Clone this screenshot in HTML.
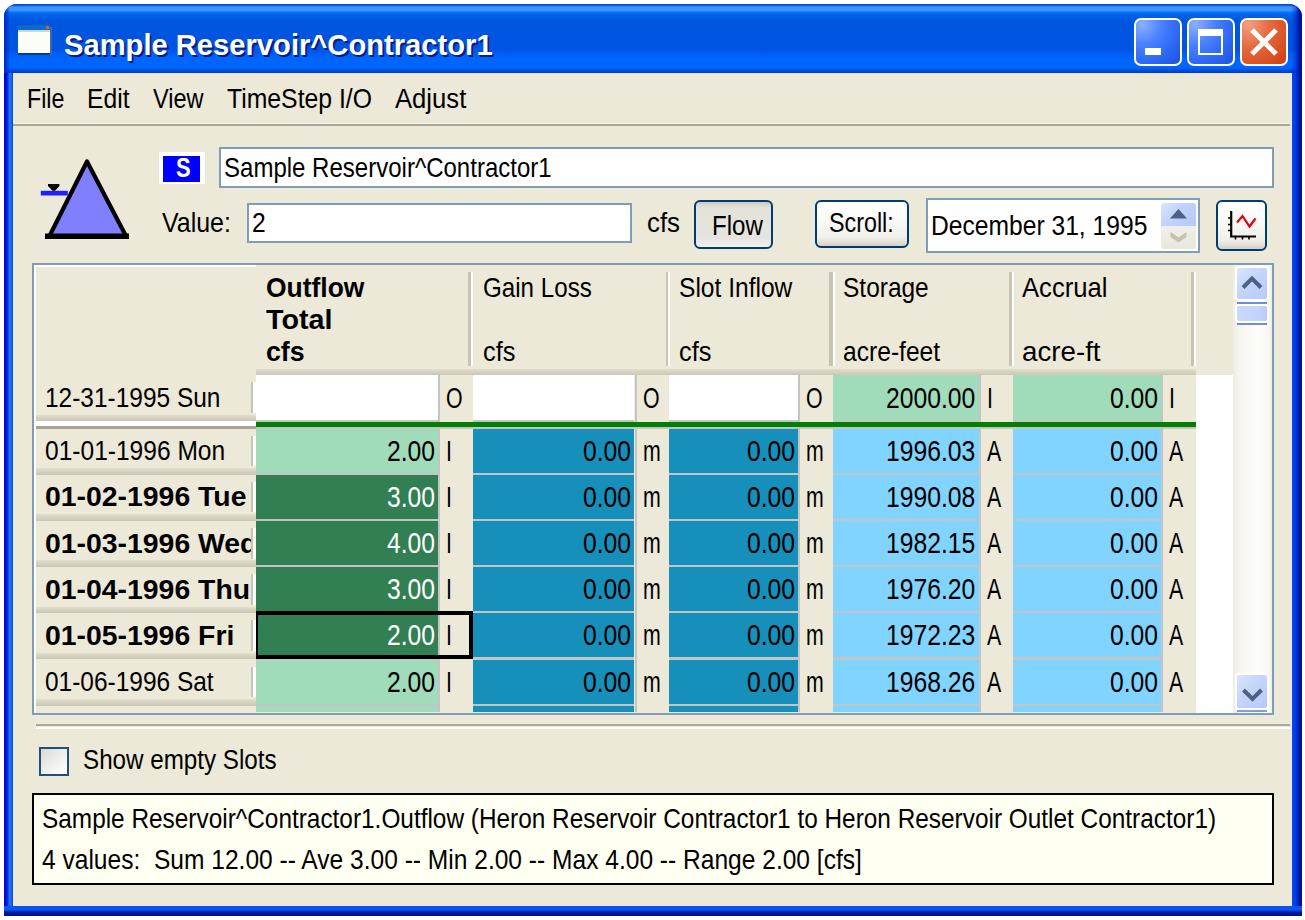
<!DOCTYPE html>
<html><head><meta charset="utf-8">
<style>
*{box-sizing:border-box;margin:0;padding:0}
html,body{width:1305px;height:920px;overflow:hidden;background:#fff;font-family:"Liberation Sans",sans-serif;color:#000;position:relative}
.a{position:absolute}
.t{position:absolute;white-space:nowrap}
</style></head><body>

<div class="a" style="left:4px;top:4px;width:1298px;height:912px;border-radius:13px 13px 0 0;overflow:hidden;background:#0831D9">
<div class="a" style="left:0;top:0;width:1298px;height:69px;background:linear-gradient(to bottom,#0040D8 0px,#0C5CF0 1.5px,#3D95FF 3px,#3D95FF 6.5px,#0A7AF5 8px,#0066EE 10px,#0055DD 17px,#0054E3 46px,#005EF7 50px,#0066FF 55px,#0064FA 64px,#0050E0 66px,#0038D0 69px)"></div>
<div class="a" style="left:0;top:69px;width:9px;height:843px;background:linear-gradient(to right,#0000D0 0,#0014D8 2px,#0A30E0 4px,#1C70F0 5px,#1C70F0 7px,#0040E0 9px)"></div>
<div class="a" style="left:1288px;top:69px;width:10px;height:843px;background:linear-gradient(to right,#0048F0 0,#0040E8 3px,#0030D0 5px,#001AA0 7px,#00108A 10px)"></div>
<div class="a" style="left:0;top:902px;width:1298px;height:10px;background:linear-gradient(to bottom,#0A50F0 0,#0A5AF5 3px,#0040D8 5px,#001AA0 6px,#00108A 10px)"></div>
<div class="a" style="left:1287px;top:0;width:11px;height:69px;background:linear-gradient(to right,rgba(0,40,200,0) 0,rgba(0,30,190,0.5) 5px,#0018A8 8px,#00108C 11px)"></div>
<div class="a" style="left:0;top:0;width:6px;height:69px;background:linear-gradient(to right,#0028C8 0,rgba(0,40,210,0.6) 3px,rgba(0,60,230,0) 6px)"></div>
</div>
<div class="a" style="left:13.00px;top:73.00px;width:1279.00px;height:833.00px;background:#ECE9D8;"></div>
<div class="a" style="left:18.00px;top:25.00px;width:32.00px;height:4.50px;background:#0A6ACC;"></div>
<div class="a" style="left:46.00px;top:26.00px;width:3.00px;height:3.00px;background:#F05A10;"></div>
<div class="a" style="left:18.00px;top:29.50px;width:32.00px;height:2.50px;background:#C8D8D8;"></div>
<div class="a" style="left:18.00px;top:32.00px;width:32.00px;height:20.50px;background:#FCFDF6;"></div>
<div class="a" style="left:18.00px;top:52.50px;width:34.00px;height:2.00px;background:#0A3A8A;"></div>
<div class="a" style="left:50.00px;top:27.00px;width:2.00px;height:27.50px;background:#3A6AB0;"></div>
<div class="t" style="left:63.50px;top:29.61px;font-size:30px;line-height:30px;color:#fff;font-weight:bold;transform:scale(0.9719,1.0000);transform-origin:0 25.39px;text-shadow:2px 2px 0 #0A1E80;">Sample Reservoir^Contractor1</div>
<div class="a" style="left:1133.5px;top:18px;width:48px;height:48px;border:2px solid #fff;border-radius:7px;background:radial-gradient(ellipse at 15% 10%,#8CB0FF 0,#4A82FF 35%,#2C66F4 70%,#1E52DC 100%)"></div>
<div class="a" style="left:1145.00px;top:48.00px;width:16.00px;height:7.00px;background:#fff;"></div>
<div class="a" style="left:1186.5px;top:18px;width:48px;height:48px;border:2px solid #fff;border-radius:7px;background:radial-gradient(ellipse at 15% 10%,#8CB0FF 0,#4A82FF 35%,#2C66F4 70%,#1E52DC 100%)"></div>
<div class="a" style="left:1198px;top:29px;width:25px;height:26px;border:2.5px solid #fff;border-top-width:7px"></div>
<div class="a" style="left:1240px;top:18px;width:48px;height:48px;border:2px solid #fff;border-radius:7px;background:radial-gradient(ellipse at 15% 10%,#F2A080 0,#E46A40 40%,#DA5020 75%,#CC4010 100%)"></div>
<svg class="a" style="left:1240px;top:18px" width="48" height="48"><path d="M12 12 L36 36 M36 12 L12 36" stroke="#fff" stroke-width="5"/></svg>
<div class="t" style="left:27.30px;top:86.49px;font-size:26px;line-height:26px;color:#000;transform:scale(0.8935,1.0800);transform-origin:0 22.01px;">File</div>
<div class="t" style="left:87.40px;top:86.49px;font-size:26px;line-height:26px;color:#000;transform:scale(0.9498,1.0800);transform-origin:0 22.01px;">Edit</div>
<div class="t" style="left:152.90px;top:86.49px;font-size:26px;line-height:26px;color:#000;transform:scale(0.9052,1.0800);transform-origin:0 22.01px;">View</div>
<div class="t" style="left:227.00px;top:86.49px;font-size:26px;line-height:26px;color:#000;transform:scale(0.9525,1.0800);transform-origin:0 22.01px;">TimeStep I/O</div>
<div class="t" style="left:395.30px;top:86.49px;font-size:26px;line-height:26px;color:#000;transform:scale(0.9864,1.0800);transform-origin:0 22.01px;">Adjust</div>
<div class="a" style="left:13.00px;top:122.50px;width:1277.00px;height:1.50px;background:#F4F2E8;"></div>
<div class="a" style="left:13.00px;top:124.00px;width:1277.00px;height:2.20px;background:#A7A593;"></div>
<svg class="a" style="left:30px;top:150px" width="110" height="95" viewBox="0 0 110 95">
<polygon points="57,11.5 96.5,87 19,87" fill="#8080FF" stroke="#000" stroke-width="4.2" stroke-linejoin="round"/>
<rect x="15" y="83.5" width="84" height="5.5" fill="#000"/>
<rect x="10.8" y="40.8" width="27" height="4.7" fill="#2020FF"/>
<polygon points="18,34 29.4,34 29.4,36 25,40.8 22.5,40.8 18,36" fill="#000"/>
</svg>
<div class="a" style="left:159.00px;top:152.20px;width:45.70px;height:31.60px;background:#fff;"></div>
<div class="a" style="left:163.00px;top:156.00px;width:37.30px;height:25.80px;background:#0000FF;"></div>
<div class="t" style="left:176.00px;top:156.68px;font-size:24px;line-height:24px;color:#fff;font-weight:bold;transform:scale(0.9148,1.1200);transform-origin:0 20.32px;">S</div>
<div class="a" style="left:218.5px;top:147.2px;width:1055.5px;height:41px;border:2px solid #7F9DB9;background:#fff"></div>
<div class="t" style="left:224.20px;top:154.99px;font-size:26px;line-height:26px;color:#000;transform:scale(0.9238,1.0800);transform-origin:0 22.01px;">Sample Reservoir^Contractor1</div>
<div class="t" style="left:162.20px;top:210.49px;font-size:26px;line-height:26px;color:#000;transform:scale(0.9601,1.0800);transform-origin:0 22.01px;">Value:</div>
<div class="a" style="left:246.9px;top:202.9px;width:385.0px;height:40.6px;border:2px solid #7F9DB9;background:#fff"></div>
<div class="t" style="left:251.90px;top:210.49px;font-size:26px;line-height:26px;color:#000;transform:scale(0.9494,1.0800);transform-origin:0 22.01px;">2</div>
<div class="t" style="left:646.50px;top:209.69px;font-size:26px;line-height:26px;color:#000;transform:scale(0.9946,1.0800);transform-origin:0 22.01px;">cfs</div>
<div class="a" style="left:694.3px;top:200px;width:78.6px;height:49px;border:2px solid #003C74;border-radius:6px;background:linear-gradient(to bottom,#CDCAC3 0,#E3E2DA 12%,#E5E4DE 80%,#F2F1EE 100%)"></div>
<div class="t" style="left:711.60px;top:212.79px;font-size:26px;line-height:26px;color:#000;transform:scale(0.9274,1.0800);transform-origin:0 22.01px;">Flow</div>
<div class="a" style="left:815px;top:200.4px;width:93.8px;height:48.1px;border:2px solid #003C74;border-radius:6px;background:linear-gradient(to bottom,#FFFFFF 0,#FBFBF9 30%,#F0F0EA 80%,#E3DFD4 92%,#D6D0C5 100%)"></div>
<div class="t" style="left:829.30px;top:209.69px;font-size:26px;line-height:26px;color:#000;transform:scale(0.8965,1.0800);transform-origin:0 22.01px;">Scroll:</div>
<div class="a" style="left:925.7px;top:198.3px;width:274.1px;height:54.5px;border:2px solid #7F9DB9;background:#fff"></div>
<div class="t" style="left:931.10px;top:212.69px;font-size:26px;line-height:26px;color:#000;transform:scale(0.9474,1.0800);transform-origin:0 22.01px;">December 31, 1995</div>
<div class="a" style="left:1161px;top:202.9px;width:34.7px;height:22.7px;border-radius:3px 3px 0 0;background:linear-gradient(135deg,#DCE6FC 0,#C2D4FA 40%,#B4C9F8 100%)"></div>
<div class="a" style="left:1161px;top:225.6px;width:34.7px;height:23px;border-radius:0 0 3px 3px;background:linear-gradient(to bottom,#EFEEE8 0,#E9E8E0 100%)"></div>
<svg class="a" style="left:1161px;top:202.9px" width="35" height="46"><path d="M9 15.5 L17.5 6 L26 15.5 Z" fill="#4D6185"/><path d="M9.5 29 L17.5 34.5 L25.5 29 L25.5 34 L17.5 39.5 L9.5 34 Z" fill="#C5C2B2"/></svg>
<div class="a" style="left:1216.4px;top:200.1px;width:50.6px;height:50.6px;border:2px solid #003C74;border-radius:6px;background:linear-gradient(to bottom,#FFFFFF 0,#FBFBF9 30%,#F0F0EA 80%,#E3DFD4 92%,#D6D0C5 100%)"></div>
<svg class="a" style="left:1216.4px;top:200.1px" width="51" height="51">
<path d="M15.2 11 V36.5 H40" fill="none" stroke="#000" stroke-width="2.2"/>
<path d="M12 18h3 M12 24.5h3 M12 30.5h3 M19.5 37v2.5 M26.5 37v2.5 M33 37v2.5" stroke="#000" stroke-width="1.6"/>
<path d="M21 22.5 L26.5 16 L33.5 26.5 L39.5 18.5" fill="none" stroke="#E00010" stroke-width="2.2"/>
</svg>
<div class="a" style="left:32px;top:262.5px;width:1242px;height:452.0px;border:2px solid #7F9DB9;background:#ECE9D8"></div>
<div class="a" style="left:34.00px;top:264.50px;width:222.00px;height:2.00px;background:#fff;"></div>
<div class="a" style="left:34.00px;top:264.50px;width:2.00px;height:448.00px;background:#fff;"></div>
<div class="a" style="left:256.00px;top:368.80px;width:939.60px;height:6.20px;background:linear-gradient(to bottom,#E2DECD 0,#D6D2C2 50%,#CBC7B8 100%);"></div>
<div class="a" style="left:468.20px;top:271.60px;width:2.40px;height:94.90px;background:#C7C5B2;"></div>
<div class="a" style="left:470.60px;top:271.60px;width:2.00px;height:94.90px;background:#FFFFFF;"></div>
<div class="a" style="left:665.50px;top:271.60px;width:2.80px;height:94.90px;background:#C7C5B2;"></div>
<div class="a" style="left:668.30px;top:271.60px;width:2.00px;height:94.90px;background:#FFFFFF;"></div>
<div class="a" style="left:829.40px;top:271.60px;width:3.20px;height:94.90px;background:#C7C5B2;"></div>
<div class="a" style="left:832.60px;top:271.60px;width:2.00px;height:94.90px;background:#FFFFFF;"></div>
<div class="a" style="left:1008.90px;top:271.60px;width:3.50px;height:94.90px;background:#C7C5B2;"></div>
<div class="a" style="left:1012.40px;top:271.60px;width:2.00px;height:94.90px;background:#FFFFFF;"></div>
<div class="a" style="left:1190.80px;top:271.60px;width:2.80px;height:94.90px;background:#C7C5B2;"></div>
<div class="a" style="left:1193.60px;top:271.60px;width:2.00px;height:94.90px;background:#FFFFFF;"></div>
<div class="t" style="left:266.00px;top:274.79px;font-size:26px;line-height:26px;color:#000;font-weight:bold;transform:scale(1.0170,1.0800);transform-origin:0 22.01px;">Outflow</div>
<div class="t" style="left:266.00px;top:307.19px;font-size:26px;line-height:26px;color:#000;font-weight:bold;transform:scale(1.1048,1.0800);transform-origin:0 22.01px;">Total</div>
<div class="t" style="left:266.00px;top:339.19px;font-size:26px;line-height:26px;color:#000;font-weight:bold;transform:scale(1.0274,1.0800);transform-origin:0 22.01px;">cfs</div>
<div class="t" style="left:482.70px;top:274.79px;font-size:26px;line-height:26px;color:#000;transform:scale(0.9297,1.0800);transform-origin:0 22.01px;">Gain Loss</div>
<div class="t" style="left:482.70px;top:339.19px;font-size:26px;line-height:26px;color:#000;transform:scale(0.9766,1.0800);transform-origin:0 22.01px;">cfs</div>
<div class="t" style="left:679.20px;top:274.79px;font-size:26px;line-height:26px;color:#000;transform:scale(0.9451,1.0800);transform-origin:0 22.01px;">Slot Inflow</div>
<div class="t" style="left:679.20px;top:339.19px;font-size:26px;line-height:26px;color:#000;transform:scale(0.9766,1.0800);transform-origin:0 22.01px;">cfs</div>
<div class="t" style="left:843.00px;top:274.79px;font-size:26px;line-height:26px;color:#000;transform:scale(0.9415,1.0800);transform-origin:0 22.01px;">Storage</div>
<div class="t" style="left:843.00px;top:339.19px;font-size:26px;line-height:26px;color:#000;transform:scale(0.9467,1.0800);transform-origin:0 22.01px;">acre-feet</div>
<div class="t" style="left:1021.50px;top:274.79px;font-size:26px;line-height:26px;color:#000;transform:scale(0.9860,1.0800);transform-origin:0 22.01px;">Accrual</div>
<div class="t" style="left:1021.50px;top:339.19px;font-size:26px;line-height:26px;color:#000;transform:scale(1.0663,1.0800);transform-origin:0 22.01px;">acre-ft</div>
<div class="a" style="left:1195.60px;top:375.00px;width:37.40px;height:337.50px;background:#fff;"></div>
<div class="a" style="left:256.00px;top:375.00px;width:182.10px;height:44.50px;background:#fff;"></div>
<div class="a" style="left:256.00px;top:419.50px;width:182.10px;height:2.20px;background:#C4C4C4;"></div>
<div class="a" style="left:438.10px;top:375.00px;width:2.10px;height:46.70px;background:#C4C4C4;"></div>
<div class="a" style="left:440.20px;top:375.00px;width:32.70px;height:46.70px;background:#ECE9D8;"></div>
<div class="a" style="left:256.00px;top:428.60px;width:182.10px;height:44.00px;background:#A0DCBA;"></div>
<div class="a" style="left:256.00px;top:472.60px;width:182.10px;height:2.20px;background:#C4C4C4;"></div>
<div class="a" style="left:438.10px;top:428.60px;width:2.10px;height:46.20px;background:#C4C4C4;"></div>
<div class="a" style="left:440.20px;top:428.60px;width:32.70px;height:46.20px;background:#ECE9D8;"></div>
<div class="a" style="left:256.00px;top:474.80px;width:182.10px;height:44.00px;background:#317F52;"></div>
<div class="a" style="left:256.00px;top:518.80px;width:182.10px;height:2.20px;background:#C4C4C4;"></div>
<div class="a" style="left:438.10px;top:474.80px;width:2.10px;height:46.20px;background:#C4C4C4;"></div>
<div class="a" style="left:440.20px;top:474.80px;width:32.70px;height:46.20px;background:#ECE9D8;"></div>
<div class="a" style="left:256.00px;top:521.00px;width:182.10px;height:44.00px;background:#317F52;"></div>
<div class="a" style="left:256.00px;top:565.00px;width:182.10px;height:2.20px;background:#C4C4C4;"></div>
<div class="a" style="left:438.10px;top:521.00px;width:2.10px;height:46.20px;background:#C4C4C4;"></div>
<div class="a" style="left:440.20px;top:521.00px;width:32.70px;height:46.20px;background:#ECE9D8;"></div>
<div class="a" style="left:256.00px;top:567.20px;width:182.10px;height:44.00px;background:#317F52;"></div>
<div class="a" style="left:256.00px;top:611.20px;width:182.10px;height:2.20px;background:#C4C4C4;"></div>
<div class="a" style="left:438.10px;top:567.20px;width:2.10px;height:46.20px;background:#C4C4C4;"></div>
<div class="a" style="left:440.20px;top:567.20px;width:32.70px;height:46.20px;background:#ECE9D8;"></div>
<div class="a" style="left:256.00px;top:613.40px;width:182.10px;height:44.00px;background:#317F52;"></div>
<div class="a" style="left:256.00px;top:657.40px;width:182.10px;height:2.20px;background:#C4C4C4;"></div>
<div class="a" style="left:438.10px;top:613.40px;width:2.10px;height:46.20px;background:#C4C4C4;"></div>
<div class="a" style="left:440.20px;top:613.40px;width:32.70px;height:46.20px;background:#ECE9D8;"></div>
<div class="a" style="left:256.00px;top:659.60px;width:182.10px;height:44.00px;background:#A0DCBA;"></div>
<div class="a" style="left:256.00px;top:703.60px;width:182.10px;height:2.20px;background:#C4C4C4;"></div>
<div class="a" style="left:438.10px;top:659.60px;width:2.10px;height:46.20px;background:#C4C4C4;"></div>
<div class="a" style="left:440.20px;top:659.60px;width:32.70px;height:46.20px;background:#ECE9D8;"></div>
<div class="a" style="left:256.00px;top:705.80px;width:182.10px;height:6.70px;background:#A0DCBA;"></div>
<div class="a" style="left:438.10px;top:705.80px;width:2.10px;height:6.70px;background:#C4C4C4;"></div>
<div class="a" style="left:440.20px;top:705.80px;width:32.70px;height:6.70px;background:#ECE9D8;"></div>
<div class="a" style="left:472.90px;top:375.00px;width:161.60px;height:44.50px;background:#fff;"></div>
<div class="a" style="left:472.90px;top:419.50px;width:161.60px;height:2.20px;background:#C4C4C4;"></div>
<div class="a" style="left:634.50px;top:375.00px;width:2.30px;height:46.70px;background:#C4C4C4;"></div>
<div class="a" style="left:636.80px;top:375.00px;width:32.10px;height:46.70px;background:#ECE9D8;"></div>
<div class="a" style="left:472.90px;top:428.60px;width:161.60px;height:44.00px;background:#1690BA;"></div>
<div class="a" style="left:472.90px;top:472.60px;width:161.60px;height:2.20px;background:#C4C4C4;"></div>
<div class="a" style="left:634.50px;top:428.60px;width:2.30px;height:46.20px;background:#C4C4C4;"></div>
<div class="a" style="left:636.80px;top:428.60px;width:32.10px;height:46.20px;background:#ECE9D8;"></div>
<div class="a" style="left:472.90px;top:474.80px;width:161.60px;height:44.00px;background:#1690BA;"></div>
<div class="a" style="left:472.90px;top:518.80px;width:161.60px;height:2.20px;background:#C4C4C4;"></div>
<div class="a" style="left:634.50px;top:474.80px;width:2.30px;height:46.20px;background:#C4C4C4;"></div>
<div class="a" style="left:636.80px;top:474.80px;width:32.10px;height:46.20px;background:#ECE9D8;"></div>
<div class="a" style="left:472.90px;top:521.00px;width:161.60px;height:44.00px;background:#1690BA;"></div>
<div class="a" style="left:472.90px;top:565.00px;width:161.60px;height:2.20px;background:#C4C4C4;"></div>
<div class="a" style="left:634.50px;top:521.00px;width:2.30px;height:46.20px;background:#C4C4C4;"></div>
<div class="a" style="left:636.80px;top:521.00px;width:32.10px;height:46.20px;background:#ECE9D8;"></div>
<div class="a" style="left:472.90px;top:567.20px;width:161.60px;height:44.00px;background:#1690BA;"></div>
<div class="a" style="left:472.90px;top:611.20px;width:161.60px;height:2.20px;background:#C4C4C4;"></div>
<div class="a" style="left:634.50px;top:567.20px;width:2.30px;height:46.20px;background:#C4C4C4;"></div>
<div class="a" style="left:636.80px;top:567.20px;width:32.10px;height:46.20px;background:#ECE9D8;"></div>
<div class="a" style="left:472.90px;top:613.40px;width:161.60px;height:44.00px;background:#1690BA;"></div>
<div class="a" style="left:472.90px;top:657.40px;width:161.60px;height:2.20px;background:#C4C4C4;"></div>
<div class="a" style="left:634.50px;top:613.40px;width:2.30px;height:46.20px;background:#C4C4C4;"></div>
<div class="a" style="left:636.80px;top:613.40px;width:32.10px;height:46.20px;background:#ECE9D8;"></div>
<div class="a" style="left:472.90px;top:659.60px;width:161.60px;height:44.00px;background:#1690BA;"></div>
<div class="a" style="left:472.90px;top:703.60px;width:161.60px;height:2.20px;background:#C4C4C4;"></div>
<div class="a" style="left:634.50px;top:659.60px;width:2.30px;height:46.20px;background:#C4C4C4;"></div>
<div class="a" style="left:636.80px;top:659.60px;width:32.10px;height:46.20px;background:#ECE9D8;"></div>
<div class="a" style="left:472.90px;top:705.80px;width:161.60px;height:6.70px;background:#1690BA;"></div>
<div class="a" style="left:634.50px;top:705.80px;width:2.30px;height:6.70px;background:#C4C4C4;"></div>
<div class="a" style="left:636.80px;top:705.80px;width:32.10px;height:6.70px;background:#ECE9D8;"></div>
<div class="a" style="left:668.90px;top:375.00px;width:129.40px;height:44.50px;background:#fff;"></div>
<div class="a" style="left:668.90px;top:419.50px;width:129.40px;height:2.20px;background:#C4C4C4;"></div>
<div class="a" style="left:798.30px;top:375.00px;width:2.20px;height:46.70px;background:#C4C4C4;"></div>
<div class="a" style="left:800.50px;top:375.00px;width:32.40px;height:46.70px;background:#ECE9D8;"></div>
<div class="a" style="left:668.90px;top:428.60px;width:129.40px;height:44.00px;background:#1690BA;"></div>
<div class="a" style="left:668.90px;top:472.60px;width:129.40px;height:2.20px;background:#C4C4C4;"></div>
<div class="a" style="left:798.30px;top:428.60px;width:2.20px;height:46.20px;background:#C4C4C4;"></div>
<div class="a" style="left:800.50px;top:428.60px;width:32.40px;height:46.20px;background:#ECE9D8;"></div>
<div class="a" style="left:668.90px;top:474.80px;width:129.40px;height:44.00px;background:#1690BA;"></div>
<div class="a" style="left:668.90px;top:518.80px;width:129.40px;height:2.20px;background:#C4C4C4;"></div>
<div class="a" style="left:798.30px;top:474.80px;width:2.20px;height:46.20px;background:#C4C4C4;"></div>
<div class="a" style="left:800.50px;top:474.80px;width:32.40px;height:46.20px;background:#ECE9D8;"></div>
<div class="a" style="left:668.90px;top:521.00px;width:129.40px;height:44.00px;background:#1690BA;"></div>
<div class="a" style="left:668.90px;top:565.00px;width:129.40px;height:2.20px;background:#C4C4C4;"></div>
<div class="a" style="left:798.30px;top:521.00px;width:2.20px;height:46.20px;background:#C4C4C4;"></div>
<div class="a" style="left:800.50px;top:521.00px;width:32.40px;height:46.20px;background:#ECE9D8;"></div>
<div class="a" style="left:668.90px;top:567.20px;width:129.40px;height:44.00px;background:#1690BA;"></div>
<div class="a" style="left:668.90px;top:611.20px;width:129.40px;height:2.20px;background:#C4C4C4;"></div>
<div class="a" style="left:798.30px;top:567.20px;width:2.20px;height:46.20px;background:#C4C4C4;"></div>
<div class="a" style="left:800.50px;top:567.20px;width:32.40px;height:46.20px;background:#ECE9D8;"></div>
<div class="a" style="left:668.90px;top:613.40px;width:129.40px;height:44.00px;background:#1690BA;"></div>
<div class="a" style="left:668.90px;top:657.40px;width:129.40px;height:2.20px;background:#C4C4C4;"></div>
<div class="a" style="left:798.30px;top:613.40px;width:2.20px;height:46.20px;background:#C4C4C4;"></div>
<div class="a" style="left:800.50px;top:613.40px;width:32.40px;height:46.20px;background:#ECE9D8;"></div>
<div class="a" style="left:668.90px;top:659.60px;width:129.40px;height:44.00px;background:#1690BA;"></div>
<div class="a" style="left:668.90px;top:703.60px;width:129.40px;height:2.20px;background:#C4C4C4;"></div>
<div class="a" style="left:798.30px;top:659.60px;width:2.20px;height:46.20px;background:#C4C4C4;"></div>
<div class="a" style="left:800.50px;top:659.60px;width:32.40px;height:46.20px;background:#ECE9D8;"></div>
<div class="a" style="left:668.90px;top:705.80px;width:129.40px;height:6.70px;background:#1690BA;"></div>
<div class="a" style="left:798.30px;top:705.80px;width:2.20px;height:6.70px;background:#C4C4C4;"></div>
<div class="a" style="left:800.50px;top:705.80px;width:32.40px;height:6.70px;background:#ECE9D8;"></div>
<div class="a" style="left:832.90px;top:375.00px;width:146.00px;height:44.50px;background:#A0DCBA;"></div>
<div class="a" style="left:832.90px;top:419.50px;width:146.00px;height:2.20px;background:#C4C4C4;"></div>
<div class="a" style="left:978.90px;top:375.00px;width:2.00px;height:46.70px;background:#C4C4C4;"></div>
<div class="a" style="left:980.90px;top:375.00px;width:32.00px;height:46.70px;background:#ECE9D8;"></div>
<div class="a" style="left:832.90px;top:428.60px;width:146.00px;height:44.00px;background:#80D4FF;"></div>
<div class="a" style="left:832.90px;top:472.60px;width:146.00px;height:2.20px;background:#C4C4C4;"></div>
<div class="a" style="left:978.90px;top:428.60px;width:2.00px;height:46.20px;background:#C4C4C4;"></div>
<div class="a" style="left:980.90px;top:428.60px;width:32.00px;height:46.20px;background:#ECE9D8;"></div>
<div class="a" style="left:832.90px;top:474.80px;width:146.00px;height:44.00px;background:#80D4FF;"></div>
<div class="a" style="left:832.90px;top:518.80px;width:146.00px;height:2.20px;background:#C4C4C4;"></div>
<div class="a" style="left:978.90px;top:474.80px;width:2.00px;height:46.20px;background:#C4C4C4;"></div>
<div class="a" style="left:980.90px;top:474.80px;width:32.00px;height:46.20px;background:#ECE9D8;"></div>
<div class="a" style="left:832.90px;top:521.00px;width:146.00px;height:44.00px;background:#80D4FF;"></div>
<div class="a" style="left:832.90px;top:565.00px;width:146.00px;height:2.20px;background:#C4C4C4;"></div>
<div class="a" style="left:978.90px;top:521.00px;width:2.00px;height:46.20px;background:#C4C4C4;"></div>
<div class="a" style="left:980.90px;top:521.00px;width:32.00px;height:46.20px;background:#ECE9D8;"></div>
<div class="a" style="left:832.90px;top:567.20px;width:146.00px;height:44.00px;background:#80D4FF;"></div>
<div class="a" style="left:832.90px;top:611.20px;width:146.00px;height:2.20px;background:#C4C4C4;"></div>
<div class="a" style="left:978.90px;top:567.20px;width:2.00px;height:46.20px;background:#C4C4C4;"></div>
<div class="a" style="left:980.90px;top:567.20px;width:32.00px;height:46.20px;background:#ECE9D8;"></div>
<div class="a" style="left:832.90px;top:613.40px;width:146.00px;height:44.00px;background:#80D4FF;"></div>
<div class="a" style="left:832.90px;top:657.40px;width:146.00px;height:2.20px;background:#C4C4C4;"></div>
<div class="a" style="left:978.90px;top:613.40px;width:2.00px;height:46.20px;background:#C4C4C4;"></div>
<div class="a" style="left:980.90px;top:613.40px;width:32.00px;height:46.20px;background:#ECE9D8;"></div>
<div class="a" style="left:832.90px;top:659.60px;width:146.00px;height:44.00px;background:#80D4FF;"></div>
<div class="a" style="left:832.90px;top:703.60px;width:146.00px;height:2.20px;background:#C4C4C4;"></div>
<div class="a" style="left:978.90px;top:659.60px;width:2.00px;height:46.20px;background:#C4C4C4;"></div>
<div class="a" style="left:980.90px;top:659.60px;width:32.00px;height:46.20px;background:#ECE9D8;"></div>
<div class="a" style="left:832.90px;top:705.80px;width:146.00px;height:6.70px;background:#80D4FF;"></div>
<div class="a" style="left:978.90px;top:705.80px;width:2.00px;height:6.70px;background:#C4C4C4;"></div>
<div class="a" style="left:980.90px;top:705.80px;width:32.00px;height:6.70px;background:#ECE9D8;"></div>
<div class="a" style="left:1012.90px;top:375.00px;width:148.30px;height:44.50px;background:#A0DCBA;"></div>
<div class="a" style="left:1012.90px;top:419.50px;width:148.30px;height:2.20px;background:#C4C4C4;"></div>
<div class="a" style="left:1161.20px;top:375.00px;width:2.00px;height:46.70px;background:#C4C4C4;"></div>
<div class="a" style="left:1163.20px;top:375.00px;width:32.40px;height:46.70px;background:#ECE9D8;"></div>
<div class="a" style="left:1012.90px;top:428.60px;width:148.30px;height:44.00px;background:#80D4FF;"></div>
<div class="a" style="left:1012.90px;top:472.60px;width:148.30px;height:2.20px;background:#C4C4C4;"></div>
<div class="a" style="left:1161.20px;top:428.60px;width:2.00px;height:46.20px;background:#C4C4C4;"></div>
<div class="a" style="left:1163.20px;top:428.60px;width:32.40px;height:46.20px;background:#ECE9D8;"></div>
<div class="a" style="left:1012.90px;top:474.80px;width:148.30px;height:44.00px;background:#80D4FF;"></div>
<div class="a" style="left:1012.90px;top:518.80px;width:148.30px;height:2.20px;background:#C4C4C4;"></div>
<div class="a" style="left:1161.20px;top:474.80px;width:2.00px;height:46.20px;background:#C4C4C4;"></div>
<div class="a" style="left:1163.20px;top:474.80px;width:32.40px;height:46.20px;background:#ECE9D8;"></div>
<div class="a" style="left:1012.90px;top:521.00px;width:148.30px;height:44.00px;background:#80D4FF;"></div>
<div class="a" style="left:1012.90px;top:565.00px;width:148.30px;height:2.20px;background:#C4C4C4;"></div>
<div class="a" style="left:1161.20px;top:521.00px;width:2.00px;height:46.20px;background:#C4C4C4;"></div>
<div class="a" style="left:1163.20px;top:521.00px;width:32.40px;height:46.20px;background:#ECE9D8;"></div>
<div class="a" style="left:1012.90px;top:567.20px;width:148.30px;height:44.00px;background:#80D4FF;"></div>
<div class="a" style="left:1012.90px;top:611.20px;width:148.30px;height:2.20px;background:#C4C4C4;"></div>
<div class="a" style="left:1161.20px;top:567.20px;width:2.00px;height:46.20px;background:#C4C4C4;"></div>
<div class="a" style="left:1163.20px;top:567.20px;width:32.40px;height:46.20px;background:#ECE9D8;"></div>
<div class="a" style="left:1012.90px;top:613.40px;width:148.30px;height:44.00px;background:#80D4FF;"></div>
<div class="a" style="left:1012.90px;top:657.40px;width:148.30px;height:2.20px;background:#C4C4C4;"></div>
<div class="a" style="left:1161.20px;top:613.40px;width:2.00px;height:46.20px;background:#C4C4C4;"></div>
<div class="a" style="left:1163.20px;top:613.40px;width:32.40px;height:46.20px;background:#ECE9D8;"></div>
<div class="a" style="left:1012.90px;top:659.60px;width:148.30px;height:44.00px;background:#80D4FF;"></div>
<div class="a" style="left:1012.90px;top:703.60px;width:148.30px;height:2.20px;background:#C4C4C4;"></div>
<div class="a" style="left:1161.20px;top:659.60px;width:2.00px;height:46.20px;background:#C4C4C4;"></div>
<div class="a" style="left:1163.20px;top:659.60px;width:32.40px;height:46.20px;background:#ECE9D8;"></div>
<div class="a" style="left:1012.90px;top:705.80px;width:148.30px;height:6.70px;background:#80D4FF;"></div>
<div class="a" style="left:1161.20px;top:705.80px;width:2.00px;height:6.70px;background:#C4C4C4;"></div>
<div class="a" style="left:1163.20px;top:705.80px;width:32.40px;height:6.70px;background:#ECE9D8;"></div>
<div class="a" style="left:256.00px;top:421.70px;width:939.60px;height:5.00px;background:#008000;"></div>
<div class="a" style="left:256.00px;top:426.70px;width:939.60px;height:1.90px;background:#C4C4C4;"></div>
<div class="t" style="left:446.00px;top:385.59px;font-size:26px;line-height:26px;color:#000;transform:scale(0.8200,1.1400);transform-origin:0 22.01px;">O</div>
<div class="t" style="left:386.66px;top:438.59px;font-size:26px;line-height:26px;color:#000;transform:scale(0.9500,1.1400);transform-origin:0 22.01px;">2.00</div>
<div class="t" style="left:446.00px;top:438.59px;font-size:26px;line-height:26px;color:#000;transform:scale(0.8200,1.1400);transform-origin:0 22.01px;">I</div>
<div class="t" style="left:386.66px;top:484.79px;font-size:26px;line-height:26px;color:#fff;transform:scale(0.9500,1.1400);transform-origin:0 22.01px;">3.00</div>
<div class="t" style="left:446.00px;top:484.79px;font-size:26px;line-height:26px;color:#000;transform:scale(0.8200,1.1400);transform-origin:0 22.01px;">I</div>
<div class="t" style="left:386.66px;top:530.99px;font-size:26px;line-height:26px;color:#fff;transform:scale(0.9500,1.1400);transform-origin:0 22.01px;">4.00</div>
<div class="t" style="left:446.00px;top:530.99px;font-size:26px;line-height:26px;color:#000;transform:scale(0.8200,1.1400);transform-origin:0 22.01px;">I</div>
<div class="t" style="left:386.66px;top:577.19px;font-size:26px;line-height:26px;color:#fff;transform:scale(0.9500,1.1400);transform-origin:0 22.01px;">3.00</div>
<div class="t" style="left:446.00px;top:577.19px;font-size:26px;line-height:26px;color:#000;transform:scale(0.8200,1.1400);transform-origin:0 22.01px;">I</div>
<div class="t" style="left:386.66px;top:623.39px;font-size:26px;line-height:26px;color:#fff;transform:scale(0.9500,1.1400);transform-origin:0 22.01px;">2.00</div>
<div class="t" style="left:446.00px;top:623.39px;font-size:26px;line-height:26px;color:#000;transform:scale(0.8200,1.1400);transform-origin:0 22.01px;">I</div>
<div class="t" style="left:386.66px;top:669.59px;font-size:26px;line-height:26px;color:#000;transform:scale(0.9500,1.1400);transform-origin:0 22.01px;">2.00</div>
<div class="t" style="left:446.00px;top:669.59px;font-size:26px;line-height:26px;color:#000;transform:scale(0.8200,1.1400);transform-origin:0 22.01px;">I</div>
<div class="t" style="left:642.60px;top:385.59px;font-size:26px;line-height:26px;color:#000;transform:scale(0.8200,1.1400);transform-origin:0 22.01px;">O</div>
<div class="t" style="left:583.06px;top:438.59px;font-size:26px;line-height:26px;color:#000;transform:scale(0.9500,1.1400);transform-origin:0 22.01px;">0.00</div>
<div class="t" style="left:642.60px;top:438.59px;font-size:26px;line-height:26px;color:#000;transform:scale(0.8200,1.1400);transform-origin:0 22.01px;">m</div>
<div class="t" style="left:583.06px;top:484.79px;font-size:26px;line-height:26px;color:#000;transform:scale(0.9500,1.1400);transform-origin:0 22.01px;">0.00</div>
<div class="t" style="left:642.60px;top:484.79px;font-size:26px;line-height:26px;color:#000;transform:scale(0.8200,1.1400);transform-origin:0 22.01px;">m</div>
<div class="t" style="left:583.06px;top:530.99px;font-size:26px;line-height:26px;color:#000;transform:scale(0.9500,1.1400);transform-origin:0 22.01px;">0.00</div>
<div class="t" style="left:642.60px;top:530.99px;font-size:26px;line-height:26px;color:#000;transform:scale(0.8200,1.1400);transform-origin:0 22.01px;">m</div>
<div class="t" style="left:583.06px;top:577.19px;font-size:26px;line-height:26px;color:#000;transform:scale(0.9500,1.1400);transform-origin:0 22.01px;">0.00</div>
<div class="t" style="left:642.60px;top:577.19px;font-size:26px;line-height:26px;color:#000;transform:scale(0.8200,1.1400);transform-origin:0 22.01px;">m</div>
<div class="t" style="left:583.06px;top:623.39px;font-size:26px;line-height:26px;color:#000;transform:scale(0.9500,1.1400);transform-origin:0 22.01px;">0.00</div>
<div class="t" style="left:642.60px;top:623.39px;font-size:26px;line-height:26px;color:#000;transform:scale(0.8200,1.1400);transform-origin:0 22.01px;">m</div>
<div class="t" style="left:583.06px;top:669.59px;font-size:26px;line-height:26px;color:#000;transform:scale(0.9500,1.1400);transform-origin:0 22.01px;">0.00</div>
<div class="t" style="left:642.60px;top:669.59px;font-size:26px;line-height:26px;color:#000;transform:scale(0.8200,1.1400);transform-origin:0 22.01px;">m</div>
<div class="t" style="left:806.30px;top:385.59px;font-size:26px;line-height:26px;color:#000;transform:scale(0.8200,1.1400);transform-origin:0 22.01px;">O</div>
<div class="t" style="left:746.86px;top:438.59px;font-size:26px;line-height:26px;color:#000;transform:scale(0.9500,1.1400);transform-origin:0 22.01px;">0.00</div>
<div class="t" style="left:806.30px;top:438.59px;font-size:26px;line-height:26px;color:#000;transform:scale(0.8200,1.1400);transform-origin:0 22.01px;">m</div>
<div class="t" style="left:746.86px;top:484.79px;font-size:26px;line-height:26px;color:#000;transform:scale(0.9500,1.1400);transform-origin:0 22.01px;">0.00</div>
<div class="t" style="left:806.30px;top:484.79px;font-size:26px;line-height:26px;color:#000;transform:scale(0.8200,1.1400);transform-origin:0 22.01px;">m</div>
<div class="t" style="left:746.86px;top:530.99px;font-size:26px;line-height:26px;color:#000;transform:scale(0.9500,1.1400);transform-origin:0 22.01px;">0.00</div>
<div class="t" style="left:806.30px;top:530.99px;font-size:26px;line-height:26px;color:#000;transform:scale(0.8200,1.1400);transform-origin:0 22.01px;">m</div>
<div class="t" style="left:746.86px;top:577.19px;font-size:26px;line-height:26px;color:#000;transform:scale(0.9500,1.1400);transform-origin:0 22.01px;">0.00</div>
<div class="t" style="left:806.30px;top:577.19px;font-size:26px;line-height:26px;color:#000;transform:scale(0.8200,1.1400);transform-origin:0 22.01px;">m</div>
<div class="t" style="left:746.86px;top:623.39px;font-size:26px;line-height:26px;color:#000;transform:scale(0.9500,1.1400);transform-origin:0 22.01px;">0.00</div>
<div class="t" style="left:806.30px;top:623.39px;font-size:26px;line-height:26px;color:#000;transform:scale(0.8200,1.1400);transform-origin:0 22.01px;">m</div>
<div class="t" style="left:746.86px;top:669.59px;font-size:26px;line-height:26px;color:#000;transform:scale(0.9500,1.1400);transform-origin:0 22.01px;">0.00</div>
<div class="t" style="left:806.30px;top:669.59px;font-size:26px;line-height:26px;color:#000;transform:scale(0.8200,1.1400);transform-origin:0 22.01px;">m</div>
<div class="t" style="left:886.21px;top:385.59px;font-size:26px;line-height:26px;color:#000;transform:scale(0.9500,1.1400);transform-origin:0 22.01px;">2000.00</div>
<div class="t" style="left:986.70px;top:385.59px;font-size:26px;line-height:26px;color:#000;transform:scale(0.8200,1.1400);transform-origin:0 22.01px;">I</div>
<div class="t" style="left:886.21px;top:438.59px;font-size:26px;line-height:26px;color:#000;transform:scale(0.9500,1.1400);transform-origin:0 22.01px;">1996.03</div>
<div class="t" style="left:986.70px;top:438.59px;font-size:26px;line-height:26px;color:#000;transform:scale(0.8200,1.1400);transform-origin:0 22.01px;">A</div>
<div class="t" style="left:886.21px;top:484.79px;font-size:26px;line-height:26px;color:#000;transform:scale(0.9500,1.1400);transform-origin:0 22.01px;">1990.08</div>
<div class="t" style="left:986.70px;top:484.79px;font-size:26px;line-height:26px;color:#000;transform:scale(0.8200,1.1400);transform-origin:0 22.01px;">A</div>
<div class="t" style="left:886.21px;top:530.99px;font-size:26px;line-height:26px;color:#000;transform:scale(0.9500,1.1400);transform-origin:0 22.01px;">1982.15</div>
<div class="t" style="left:986.70px;top:530.99px;font-size:26px;line-height:26px;color:#000;transform:scale(0.8200,1.1400);transform-origin:0 22.01px;">A</div>
<div class="t" style="left:886.21px;top:577.19px;font-size:26px;line-height:26px;color:#000;transform:scale(0.9500,1.1400);transform-origin:0 22.01px;">1976.20</div>
<div class="t" style="left:986.70px;top:577.19px;font-size:26px;line-height:26px;color:#000;transform:scale(0.8200,1.1400);transform-origin:0 22.01px;">A</div>
<div class="t" style="left:886.21px;top:623.39px;font-size:26px;line-height:26px;color:#000;transform:scale(0.9500,1.1400);transform-origin:0 22.01px;">1972.23</div>
<div class="t" style="left:986.70px;top:623.39px;font-size:26px;line-height:26px;color:#000;transform:scale(0.8200,1.1400);transform-origin:0 22.01px;">A</div>
<div class="t" style="left:886.21px;top:669.59px;font-size:26px;line-height:26px;color:#000;transform:scale(0.9500,1.1400);transform-origin:0 22.01px;">1968.26</div>
<div class="t" style="left:986.70px;top:669.59px;font-size:26px;line-height:26px;color:#000;transform:scale(0.8200,1.1400);transform-origin:0 22.01px;">A</div>
<div class="t" style="left:1109.76px;top:385.59px;font-size:26px;line-height:26px;color:#000;transform:scale(0.9500,1.1400);transform-origin:0 22.01px;">0.00</div>
<div class="t" style="left:1169.00px;top:385.59px;font-size:26px;line-height:26px;color:#000;transform:scale(0.8200,1.1400);transform-origin:0 22.01px;">I</div>
<div class="t" style="left:1109.76px;top:438.59px;font-size:26px;line-height:26px;color:#000;transform:scale(0.9500,1.1400);transform-origin:0 22.01px;">0.00</div>
<div class="t" style="left:1169.00px;top:438.59px;font-size:26px;line-height:26px;color:#000;transform:scale(0.8200,1.1400);transform-origin:0 22.01px;">A</div>
<div class="t" style="left:1109.76px;top:484.79px;font-size:26px;line-height:26px;color:#000;transform:scale(0.9500,1.1400);transform-origin:0 22.01px;">0.00</div>
<div class="t" style="left:1169.00px;top:484.79px;font-size:26px;line-height:26px;color:#000;transform:scale(0.8200,1.1400);transform-origin:0 22.01px;">A</div>
<div class="t" style="left:1109.76px;top:530.99px;font-size:26px;line-height:26px;color:#000;transform:scale(0.9500,1.1400);transform-origin:0 22.01px;">0.00</div>
<div class="t" style="left:1169.00px;top:530.99px;font-size:26px;line-height:26px;color:#000;transform:scale(0.8200,1.1400);transform-origin:0 22.01px;">A</div>
<div class="t" style="left:1109.76px;top:577.19px;font-size:26px;line-height:26px;color:#000;transform:scale(0.9500,1.1400);transform-origin:0 22.01px;">0.00</div>
<div class="t" style="left:1169.00px;top:577.19px;font-size:26px;line-height:26px;color:#000;transform:scale(0.8200,1.1400);transform-origin:0 22.01px;">A</div>
<div class="t" style="left:1109.76px;top:623.39px;font-size:26px;line-height:26px;color:#000;transform:scale(0.9500,1.1400);transform-origin:0 22.01px;">0.00</div>
<div class="t" style="left:1169.00px;top:623.39px;font-size:26px;line-height:26px;color:#000;transform:scale(0.8200,1.1400);transform-origin:0 22.01px;">A</div>
<div class="t" style="left:1109.76px;top:669.59px;font-size:26px;line-height:26px;color:#000;transform:scale(0.9500,1.1400);transform-origin:0 22.01px;">0.00</div>
<div class="t" style="left:1169.00px;top:669.59px;font-size:26px;line-height:26px;color:#000;transform:scale(0.8200,1.1400);transform-origin:0 22.01px;">A</div>
<div class="a" style="left:256px;top:611.3px;width:216.9px;height:47.6px;border-style:solid;border-color:#000;border-width:4.3px 4.8px 4.2px 2.1px"></div>
<div class="a" style="left:36px;top:266.5px;width:215px;height:446px;overflow:hidden">
</div>
<div class="a" style="left:36.00px;top:414.60px;width:220.00px;height:6.80px;background:linear-gradient(to bottom,#E3DFCE 0,#D5D1C1 50%,#C9C5B5 100%);"></div>
<div class="a" style="left:251.00px;top:382.00px;width:2.20px;height:30.50px;background:#C8C4B2;"></div>
<div class="a" style="left:253.20px;top:382.00px;width:2.40px;height:30.50px;background:#FFFFFF;"></div>
<div class="a" style="left:36.00px;top:467.90px;width:220.00px;height:6.80px;background:linear-gradient(to bottom,#E3DFCE 0,#D5D1C1 50%,#C9C5B5 100%);"></div>
<div class="a" style="left:251.00px;top:435.60px;width:2.20px;height:30.50px;background:#C8C4B2;"></div>
<div class="a" style="left:253.20px;top:435.60px;width:2.40px;height:30.50px;background:#FFFFFF;"></div>
<div class="a" style="left:36.00px;top:514.10px;width:220.00px;height:6.80px;background:linear-gradient(to bottom,#E3DFCE 0,#D5D1C1 50%,#C9C5B5 100%);"></div>
<div class="a" style="left:251.00px;top:481.80px;width:2.20px;height:30.50px;background:#C8C4B2;"></div>
<div class="a" style="left:253.20px;top:481.80px;width:2.40px;height:30.50px;background:#FFFFFF;"></div>
<div class="a" style="left:36.00px;top:560.30px;width:220.00px;height:6.80px;background:linear-gradient(to bottom,#E3DFCE 0,#D5D1C1 50%,#C9C5B5 100%);"></div>
<div class="a" style="left:251.00px;top:528.00px;width:2.20px;height:30.50px;background:#C8C4B2;"></div>
<div class="a" style="left:253.20px;top:528.00px;width:2.40px;height:30.50px;background:#FFFFFF;"></div>
<div class="a" style="left:36.00px;top:606.50px;width:220.00px;height:6.80px;background:linear-gradient(to bottom,#E3DFCE 0,#D5D1C1 50%,#C9C5B5 100%);"></div>
<div class="a" style="left:251.00px;top:574.20px;width:2.20px;height:30.50px;background:#C8C4B2;"></div>
<div class="a" style="left:253.20px;top:574.20px;width:2.40px;height:30.50px;background:#FFFFFF;"></div>
<div class="a" style="left:36.00px;top:652.70px;width:220.00px;height:6.80px;background:linear-gradient(to bottom,#E3DFCE 0,#D5D1C1 50%,#C9C5B5 100%);"></div>
<div class="a" style="left:251.00px;top:620.40px;width:2.20px;height:30.50px;background:#C8C4B2;"></div>
<div class="a" style="left:253.20px;top:620.40px;width:2.40px;height:30.50px;background:#FFFFFF;"></div>
<div class="a" style="left:36.00px;top:698.90px;width:220.00px;height:6.80px;background:linear-gradient(to bottom,#E3DFCE 0,#D5D1C1 50%,#C9C5B5 100%);"></div>
<div class="a" style="left:251.00px;top:666.60px;width:2.20px;height:30.50px;background:#C8C4B2;"></div>
<div class="a" style="left:253.20px;top:666.60px;width:2.40px;height:30.50px;background:#FFFFFF;"></div>
<div class="a" style="left:251.00px;top:712.80px;width:2.20px;height:-0.30px;background:#C8C4B2;"></div>
<div class="a" style="left:253.20px;top:712.80px;width:2.40px;height:-0.30px;background:#FFFFFF;"></div>
<div class="a" style="left:36.00px;top:421.40px;width:220.00px;height:4.20px;background:#FFFFFF;"></div>
<div class="a" style="left:36.00px;top:425.60px;width:220.00px;height:3.00px;background:#A8A493;"></div>
<div class="a" style="left:36px;top:370px;width:215px;height:342px;overflow:hidden">
<div class="t" style="left:8.50px;top:15.39px;font-size:26px;line-height:26px;transform:scale(0.9408,1.08);transform-origin:0 22.01px;">12-31-1995 Sun</div>
<div class="t" style="left:8.50px;top:68.19px;font-size:26px;line-height:26px;transform:scale(0.9442,1.08);transform-origin:0 22.01px;">01-01-1996 Mon</div>
<div class="t" style="left:8.50px;top:114.39px;font-size:26px;line-height:26px;transform:scale(1.0916,1.08);transform-origin:0 22.01px;font-weight:bold;">01-02-1996 Tue</div>
<div class="t" style="left:8.50px;top:160.59px;font-size:26px;line-height:26px;transform:scale(1.0916,1.08);transform-origin:0 22.01px;font-weight:bold;">01-03-1996 Wed</div>
<div class="t" style="left:8.50px;top:206.79px;font-size:26px;line-height:26px;transform:scale(1.0916,1.08);transform-origin:0 22.01px;font-weight:bold;">01-04-1996 Thu</div>
<div class="t" style="left:8.50px;top:252.99px;font-size:26px;line-height:26px;transform:scale(1.0916,1.08);transform-origin:0 22.01px;font-weight:bold;">01-05-1996 Fri</div>
<div class="t" style="left:8.50px;top:299.19px;font-size:26px;line-height:26px;transform:scale(0.9410,1.08);transform-origin:0 22.01px;">01-06-1996 Sat</div>
</div>
<div class="a" style="left:1233px;top:264.5px;width:39px;height:448px;background:linear-gradient(to right,#EEEDE5 0,#F6F5F0 20%,#FDFDFB 60%,#FAF9F4 90%,#EEEDE5 100%)"></div>
<div class="a" style="left:1235.2px;top:266.3px;width:33.5px;height:34.3px;border:2px solid #fff;border-radius:4px;background:linear-gradient(135deg,#DAE4FC 0,#C4D5FA 45%,#B6CAF8 100%)"></div>
<div class="a" style="left:1237.00px;top:301.90px;width:30.00px;height:1.70px;background:#6F8FD0;"></div>
<div class="a" style="left:1235.2px;top:303.6px;width:33.5px;height:19.5px;border:2px solid #fff;border-radius:4px;background:linear-gradient(to right,#CAD8FB 0,#C4D3FA 70%,#B8CCF8 100%)"></div>
<div class="a" style="left:1237.00px;top:322.80px;width:30.00px;height:2.20px;background:#6F8FD0;"></div>
<svg class="a" style="left:1235px;top:266px" width="34" height="35"><path d="M8 21.5 L17 12.5 L26 21.5" fill="none" stroke="#4D6185" stroke-width="4"/></svg>
<div class="a" style="left:1235.2px;top:673.4px;width:34.1px;height:36.8px;border:2px solid #fff;border-radius:4px;background:linear-gradient(135deg,#DAE4FC 0,#C4D5FA 45%,#B6CAF8 100%)"></div>
<div class="a" style="left:1237.00px;top:710.20px;width:30.00px;height:2.30px;background:#7E9ED8;"></div>
<svg class="a" style="left:1235px;top:673px" width="35" height="38"><path d="M8.5 17 L17.5 26 L26.5 17" fill="none" stroke="#4D6185" stroke-width="4"/></svg>
<div class="a" style="left:36.00px;top:724.40px;width:1254.00px;height:2.10px;background:#ACA899;"></div>
<div class="a" style="left:36.00px;top:726.50px;width:1254.00px;height:2.00px;background:#FFFFFF;"></div>
<div class="a" style="left:38.9px;top:746.9px;width:30px;height:29.6px;border:2px solid #1C5180;background:linear-gradient(135deg,#DCDCD7 0,#ECECE8 45%,#FFFFFF 100%)"></div>
<div class="t" style="left:83.40px;top:746.99px;font-size:26px;line-height:26px;color:#000;transform:scale(0.9302,1.0800);transform-origin:0 22.01px;">Show empty Slots</div>
<div class="a" style="left:32px;top:793.3px;width:1242px;height:92px;border:2px solid #000;background:#FFFFF2"></div>
<div class="t" style="left:41.50px;top:805.79px;font-size:26px;line-height:26px;color:#000;transform:scale(0.9378,1.0800);transform-origin:0 22.01px;">Sample Reservoir^Contractor1.Outflow (Heron Reservoir Contractor1 to Heron Reservoir Outlet Contractor1)</div>
<div class="t" style="left:41.50px;top:847.19px;font-size:26px;line-height:26px;color:#000;transform:scale(0.9445,1.0800);transform-origin:0 22.01px;">4 values:&nbsp; Sum 12.00 -- Ave 3.00 -- Min 2.00 -- Max 4.00 -- Range 2.00 [cfs]</div>
</body></html>
